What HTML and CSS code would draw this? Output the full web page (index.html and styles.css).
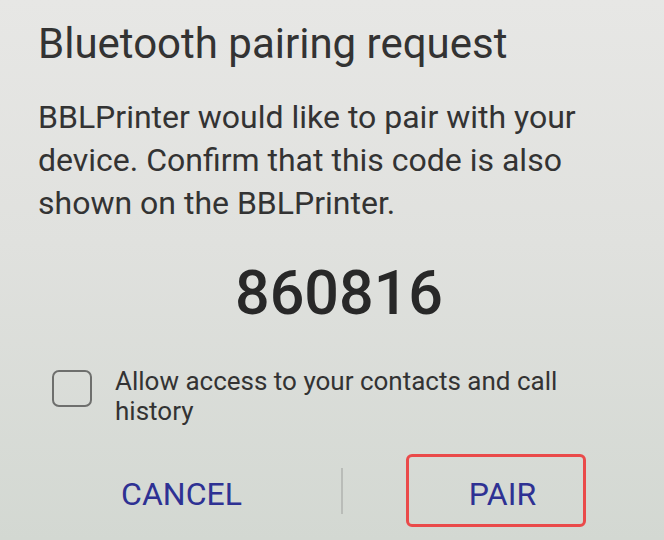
FILE: index.html
```html
<!DOCTYPE html>
<html lang="en">
<head>
  <meta charset="UTF-8">
  <meta name="viewport" content="width=device-width, initial-scale=1.0">
  <title>Bluetooth pairing request</title>
  <link rel="stylesheet" href="styles.css">
</head>
<body>

  <!-- Pairing dialog -->
  <div class="dialog">
    <h1 class="title">Bluetooth pairing request</h1>
    <p class="message">BBLPrinter would like to pair with your device. Confirm that this code is also shown on the BBLPrinter.</p>

    <div class="code">860816</div>

    <label class="access">
      <span class="checkbox"></span>
      <span class="access-text">Allow access to your contacts and call history</span>
    </label>

    <div class="actions">
      <div class="action"><span class="btn btn-cancel">CANCEL</span></div>
      <div class="divider"></div>
      <div class="action"><span class="btn btn-pair">PAIR</span></div>
    </div>
  </div>

</body>
</html>
```

FILE: styles.css
```css
* {
  margin: 0;
  padding: 0;
  box-sizing: border-box;
  font-family: Roboto, "Noto Sans", sans-serif;
}

html, body {
  height: 100%;
}

body {
  background: linear-gradient(180deg, #e7e7e5 0%, #e0e1de 45%, #d3d8d2 100%);
  color: #2f2f2f;
  overflow: hidden;
}

.dialog {
  padding: 22px 0 0 38px;
}

.title {
  font-size: 42px;
  font-weight: 400;
  line-height: 44px;
  color: #333;
}

.message {
  margin-top: 30px;
  width: 575px;
  font-size: 32px;
  line-height: 43px;
  color: #333;
}

.code {
  margin-top: 38px;
  text-align: center;
  padding-right: 24px;
  font-size: 61px;
  font-weight: 500;
  line-height: 60px;
  color: #282828;
}

.access {
  display: flex;
  align-items: flex-start;
  margin-top: 43px;
  padding-left: 14px;
}

.checkbox {
  flex: none;
  width: 40px;
  height: 37px;
  margin-top: 4px;
  border: 2px solid #6e6f6d;
  border-radius: 7px;
}

.access-text {
  margin-left: 23px;
  width: 470px;
  font-size: 26px;
  line-height: 30px;
  color: #333;
}

.actions {
  display: flex;
  align-items: center;
  margin: 28px 0 0 -16px;
  width: 640px;
}

.action {
  flex: 1;
  display: flex;
  justify-content: center;
}

.divider {
  width: 2px;
  height: 46px;
  background: #b9bcb8;
}

.btn {
  font-size: 32px;
  line-height: 34px;
  color: #2e3193;
}

.btn-cancel {
  padding-top: 6px;
}

.btn-pair {
  display: flex;
  justify-content: center;
  align-items: center;
  width: 180px;
  height: 73px;
  margin-left: -14px;
  padding: 6px 0 0 14px;
  border: 3px solid #ea4a4a;
  border-radius: 6px;
}
```
